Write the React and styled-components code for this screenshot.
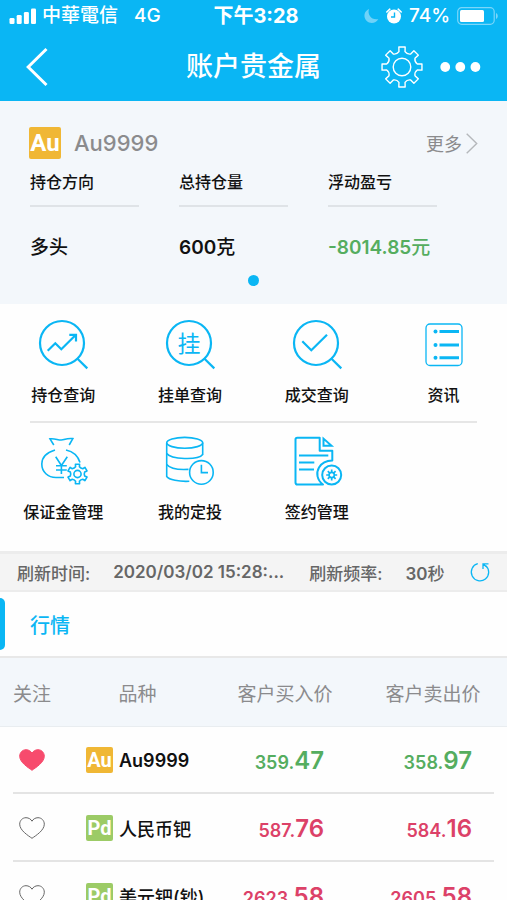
import React, { useState } from 'react';
import styled, { createGlobalStyle } from 'styled-components';

const BLUE = '#0ab6f4';

const GlobalStyle = createGlobalStyle`
  * {
    box-sizing: border-box;
  }

  body {
    margin: 0;
    background: #fefefe;
    color: #111;
    font-family: Inter, "Noto Sans CJK SC", sans-serif;
    font-weight: 500;
  }

  button {
    padding: 0;
    border: none;
    background: none;
    color: inherit;
    font: inherit;
    cursor: pointer;
  }

  svg {
    display: block;
    overflow: visible;
  }
`;

const Screen = styled.div`
  display: flex;
  flex-direction: column;
  height: 100vh;
  overflow: hidden;
`;

const Header = styled.header`
  flex: none;
  background: ${BLUE};
  color: white;
`;

const StatusBar = styled.div`
  display: grid;
  grid-template-columns: 1fr auto 1fr;
  align-items: center;
  height: 32px;
  padding: 0 9px;
  font-family: Inter, "Noto Sans CJK TC", sans-serif;
  font-size: 19px;
  line-height: 24px;
`;

const StatusGroup = styled.div`
  display: flex;
  align-items: center;
  justify-content: ${({ $end }) => ($end ? 'flex-end' : 'flex-start')};
  gap: ${({ $end }) => ($end ? '7px' : '6px')};
`;

const Carrier = styled.span`
  margin-right: 10px;
`;

const Clock = styled.span`
  padding-left: 5px;
  font-size: 20px;
  font-weight: 700;
`;

const NavBar = styled.div`
  display: grid;
  grid-template-columns: 1fr auto 1fr;
  align-items: center;
  height: 69px;
  padding: 0 26px;
`;

const NavTitle = styled.h1`
  margin: 0;
  font-size: 27px;
  font-weight: 500;
  line-height: 36px;
`;

const NavActions = styled.div`
  display: flex;
  align-items: center;
  justify-content: flex-end;
  gap: 17px;
`;

const NavButton = styled.button`
  justify-self: start;
`;

const Summary = styled.section`
  flex: none;
  padding: 26px 29px 18px;
  background: #f3f7fb;
`;

const SummaryTop = styled.div`
  display: flex;
  align-items: center;
  height: 32px;
`;

const Badge = styled.span`
  display: flex;
  flex: none;
  align-items: center;
  justify-content: center;
  width: ${({ $large }) => ($large ? '32px' : '27px')};
  height: ${({ $large }) => ($large ? '32px' : '26px')};
  border-radius: 2px;
  background: ${({ $color }) => $color};
  color: white;
  font-family: Roboto, sans-serif;
  font-size: ${({ $large }) => ($large ? '24px' : '20px')};
  font-weight: 700;
  line-height: 1;
`;

const SummaryName = styled.h2`
  flex: 1;
  margin: 0 0 0 13px;
  color: #8b8b8d;
  font-size: 22px;
  font-weight: 500;
  line-height: 32px;
`;

const MoreLink = styled.a`
  display: flex;
  align-items: center;
  gap: 4px;
  color: #8b8b8d;
  font-size: 18px;
  font-weight: 400;
  text-decoration: none;
`;

const Figures = styled.dl`
  display: grid;
  grid-template-columns: repeat(3, 1fr);
  gap: 40px;
  margin: 11px 41px 15px 1px;
`;

const FigureLabel = styled.dt`
  padding-bottom: 11px;
  border-bottom: 2px solid #dfe3e7;
  font-size: 16px;
  line-height: 24px;
`;

const FigureValue = styled.dd`
  margin: 29px 0 0;
  color: ${({ $down }) => ($down ? '#55ad5f' : '#111')};
  font-size: 19px;
  font-weight: 600;
  line-height: 24px;
  white-space: nowrap;
`;

const CjkUnit = styled.span`
  font-weight: 500;
`;

const PageDot = styled.div`
  width: 11px;
  height: 11px;
  margin: 0 auto;
  border-radius: 50%;
  background: ${BLUE};
`;

const Menu = styled.nav`
  flex: none;
  padding: 15px 0 27px;
`;

const MenuRow = styled.div`
  display: grid;
  grid-template-columns: repeat(4, 1fr);
`;

const MenuDivider = styled.hr`
  height: 2px;
  margin: 14px 30px 13px;
  border: none;
  background: #e6e6e6;
`;

const MenuItem = styled.a`
  display: flex;
  flex-direction: column;
  align-items: center;
  gap: 14px;
  color: #111;
  font-size: 16px;
  line-height: 24px;
  text-decoration: none;
`;

const RefreshBar = styled.div`
  display: flex;
  flex: none;
  align-items: center;
  height: 41px;
  padding: 0 17px;
  border-top: 3px solid #ececec;
  border-bottom: 2px solid #ececec;
  background: #f4f4f4;
  color: #666;
  font-size: 17px;
  white-space: nowrap;
`;

const RefreshValue = styled.span`
  margin-right: ${({ $last }) => ($last ? 'auto' : '25px')};
  margin-left: 23px;
  font-weight: 600;
`;

const Tabs = styled.div`
  display: flex;
  flex: none;
  align-items: center;
  height: 66px;
  border-bottom: 2px solid #e8e8e8;
`;

const Tab = styled.button`
  display: flex;
  align-items: center;
  gap: 25px;
  color: ${BLUE};
  font-size: 20px;

  &::before {
    content: '';
    width: 5px;
    height: 52px;
    border-radius: 0 6px 6px 0;
    background: ${BLUE};
  }
`;

const Quotes = styled.div`
  flex: 1;
  min-height: 0;
  overflow-y: auto;
  scrollbar-width: none;
`;

const QuoteTable = styled.table`
  width: 100%;
  border-collapse: collapse;
  table-layout: fixed;
`;

const HeadCell = styled.th`
  width: ${({ $width }) => $width || 'auto'};
  height: 68px;
  padding: 2px 0 0;
  border-bottom: 1px solid #e9edf0;
  background: #f3f7fb;
  color: #8b8b8d;
  font-size: 19px;
  font-weight: 400;
  white-space: nowrap;
`;

const QuoteRow = styled.tr`
  height: 68px;
  background: linear-gradient(#e4e4e4, #e4e4e4) center bottom / calc(100% - 26px) 2px no-repeat;
`;

const HeartCell = styled.td`
  padding: 0;
  text-align: center;
`;

const HeartButton = styled.button`
  display: block;
  margin: 0 auto;
`;

const NameCell = styled.td`
  padding: 0 0 0 22px;
`;

const Product = styled.div`
  display: flex;
  align-items: center;
  gap: 6px;
  font-size: 18px;
  font-weight: 600;
  white-space: nowrap;
`;

const ProductName = styled.span`
  font-weight: ${({ $latin }) => ($latin ? 600 : 500)};
`;

const PriceCell = styled.td`
  padding: 0 35px 0 0;
  color: ${({ $up }) => ($up ? '#dc4168' : '#55ad5f')};
  font-size: 18px;
  font-weight: 600;
  text-align: right;
  white-space: nowrap;
`;

const Cents = styled.span`
  font-size: 24px;
`;

function gearPath(cx, cy, outer, inner, teeth) {
  const step = (Math.PI * 2) / teeth;
  const pt = (r, a) => `${(cx + r * Math.sin(a)).toFixed(2)} ${(cy - r * Math.cos(a)).toFixed(2)}`;
  let d = '';
  for (let i = 0; i < teeth; i++) {
    const a = i * step;
    d += `${i ? 'L' : 'M'}${pt(inner, a - step * 0.25)} L${pt(outer, a - step * 0.2)} `;
    d += `L${pt(outer, a + step * 0.2)} L${pt(inner, a + step * 0.25)} `;
    d += `Q${pt(inner * 0.86, a + step * 0.5)} ${pt(inner, a + step * 0.75)} `;
  }
  return d + 'Z';
}

function Icon({ children, stroke = 2 }) {
  return (
    <svg width="50" height="50" viewBox="0 0 50 50" fill="none" stroke={BLUE} strokeWidth={stroke} aria-hidden="true">
      {children}
    </svg>
  );
}

function SearchIcon({ children }) {
  return (
    <Icon stroke={2.2}>
      <circle cx="24" cy="24" r="22" />
      <path d="M39 39.3L49.3 49.4" />
      {children}
    </Icon>
  );
}

const icons = {
  position: (
    <SearchIcon>
      <path d="M9.7 31.7L17.3 24.2L23.3 30.3L37.4 16.2M31.3 15.8H38V22.4" />
    </SearchIcon>
  ),
  pending: (
    <SearchIcon>
      <text x="24" y="33" textAnchor="middle" fontSize="23" fontWeight="400" fill={BLUE} stroke="none">挂</text>
    </SearchIcon>
  ),
  deal: (
    <SearchIcon>
      <path d="M10.3 22.3L19.3 31.3L35 15.7" />
    </SearchIcon>
  ),
  news: (
    <Icon stroke={1.3}>
      <rect x="7" y="5" width="36" height="41.5" rx="4" />
      <path d="M20.5 12.5H40M20.5 26H40M20.5 38.7H40" strokeWidth="3" />
      <g fill={BLUE} stroke="none">
        <circle cx="16.5" cy="12.5" r="2" />
        <circle cx="16.5" cy="26" r="2" />
        <circle cx="16.5" cy="38.7" r="2" />
      </g>
    </Icon>
  ),
  margin: (
    <Icon stroke={1.6}>
      <path d="M15.8 9L12 2.8C18 2 21 5.2 26 3.6C29.5 2.5 32 2.2 34.8 2.6L31.2 9" />
      <path d="M17 14C9 16.5 3.8 21.5 3.8 28C3.8 36 10 41.5 18 41.5H26M28 14C35 15.5 40 20 42 26.5" />
      <path d="M17.7 20.7L23.4 29.5L29.3 20.7M23.4 29.5V38M18 29.8H28.8M18 34H28.8" />
      <path d={gearPath(39.5, 38, 10, 7.4, 6)} strokeLinejoin="round" />
      <circle cx="39.5" cy="38" r="3.6" />
    </Icon>
  ),
  invest: (
    <Icon stroke={1.6}>
      <ellipse cx="19.7" cy="6.8" rx="18" ry="5.4" />
      <path d="M1.7 6.8V40.5C4 43.8 14 45.8 24.3 45.3M37.7 6.8V19" />
      <path d="M1.7 17.5C6 23.5 33 24.5 37.7 18.5M1.7 28.5C5 32.5 14 34 23.5 33.4" />
      <circle cx="36.4" cy="36.4" r="11.8" />
      <path d="M36.4 28.7V36.6H43" />
    </Icon>
  ),
  contract: (
    <Icon>
      <path d="M27.7 1.8H5.3Q3.5 1.8 3.5 3.6V46.5Q3.5 48.6 5.5 48.6H31C25 44 23.8 37 27 31.5C30 26.5 35 24.8 40.3 24.6V14.7H27.7Z" strokeLinejoin="round" />
      <path d="M31.5 2.6V9.7H39.5Z" />
      <path d="M7 19.4H36.3M7 26.4H22.3M7 33.4H22" />
      <circle cx="39.7" cy="39" r="9.5" />
      <circle cx="39.7" cy="39" r="2.6" strokeWidth="1.6" />
      <path d="M39.7 33.5V36.5M39.7 41.5V44.5M34.2 39H37.2M42.2 39H45.2M35.8 35.1L38 37.3M41.4 40.7L43.6 42.9M43.6 35.1L41.4 37.3M38 40.7L35.8 42.9" strokeWidth="1.7" />
    </Icon>
  ),
};

const menuRows = [
  [
    { icon: 'position', label: '持仓查询' },
    { icon: 'pending', label: '挂单查询' },
    { icon: 'deal', label: '成交查询' },
    { icon: 'news', label: '资讯' },
  ],
  [
    { icon: 'margin', label: '保证金管理' },
    { icon: 'invest', label: '我的定投' },
    { icon: 'contract', label: '签约管理' },
  ],
];

const metals = { Au: '#f0b735', Pd: '#9ccb66' };

const quotes = [
  { metal: 'Au', name: 'Au9999', buy: '359.47', sell: '358.97', up: false },
  { metal: 'Pd', name: '人民币钯', buy: '587.76', sell: '584.16', up: true },
  { metal: 'Pd', name: '美元钯(钞)', buy: '2623.58', sell: '2605.58', up: true },
];

function Price({ value, up }) {
  const [whole, cents] = value.split('.');
  return (
    <PriceCell $up={up}>
      {whole}.<Cents>{cents}</Cents>
    </PriceCell>
  );
}

function Heart({ filled }) {
  return (
    <svg width="26" height="22" viewBox="0 0 26 22" fill={filled ? '#f74b6d' : 'none'} stroke={filled ? '#f74b6d' : '#666'} strokeWidth="1">
      <path d="M13 21.3C9.5 18.8 0.7 13.5 0.7 7.2C0.7 3.5 3.5 0.7 7 0.7C9.8 0.7 12 2.3 13 4.2C14 2.3 16.2 0.7 19 0.7C22.5 0.7 25.3 3.5 25.3 7.2C25.3 13.5 16.5 18.8 13 21.3Z" />
    </svg>
  );
}

function PhoneStatus() {
  return (
    <StatusBar>
      <StatusGroup>
        <svg width="27" height="17" viewBox="0 0 27 17" fill="white">
          <rect x="0.5" y="10" width="5" height="6" rx="1.3" />
          <rect x="7.7" y="7" width="5" height="9" rx="1.3" />
          <rect x="14.9" y="4" width="5" height="12" rx="1.3" />
          <rect x="22" y="0.5" width="5" height="15.5" rx="1.3" />
        </svg>
        <Carrier>中華電信</Carrier>
        <span>4G</span>
      </StatusGroup>
      <Clock>下午3:28</Clock>
      <StatusGroup $end>
        <svg width="15" height="16" viewBox="0 0 15 16" fill="#6fd2f8">
          <path d="M5 1C0 3 -1 9 2.5 12.7C6 16.2 12 15.5 14.3 11C8 12.5 3 7 5 1Z" />
        </svg>
        <svg width="16" height="16" viewBox="0 0 16 16" fill="white">
          <circle cx="8" cy="8.5" r="7" />
          <path d="M0.8 4L3.8 1.2M15.2 4L12.2 1.2" stroke="white" strokeWidth="1.6" strokeLinecap="round" />
          <path d="M8.5 4.5V9H5" fill="none" stroke={BLUE} strokeWidth="1.4" />
        </svg>
        <span>74%</span>
        <svg width="41" height="18" viewBox="0 0 41 18" fill="none">
          <rect x="0.7" y="0.7" width="36.5" height="16.6" rx="4" stroke="#7bd6f9" strokeWidth="1.2" />
          <rect x="3" y="3" width="24" height="12" rx="1.5" fill="white" />
          <path d="M39 6C41.3 7.2 41.3 10.8 39 12Z" fill="#7bd6f9" />
        </svg>
      </StatusGroup>
    </StatusBar>
  );
}

export default function App() {
  const [favorites, setFavorites] = useState(['Au9999']);

  function toggleFavorite(name) {
    setFavorites(favorites.includes(name) ? favorites.filter((f) => f !== name) : [...favorites, name]);
  }

  return (
    <Screen>
      <GlobalStyle />
      <Header>
        <PhoneStatus />
        <NavBar>
          <NavButton aria-label="返回">
            <svg width="22" height="38" viewBox="0 0 22 38" fill="none" stroke="white" strokeWidth="3">
              <path d="M20.5 1L2.2 19L20.5 37" />
            </svg>
          </NavButton>
          <NavTitle>账户贵金属</NavTitle>
          <NavActions>
            <NavButton aria-label="设置">
              <svg width="42" height="42" viewBox="0 0 42 42" fill="none" stroke="white" strokeWidth="1.4" strokeLinejoin="round">
                <path d={gearPath(21, 21, 20.2, 15.6, 8)} />
                <circle cx="21" cy="21" r="8.8" />
              </svg>
            </NavButton>
            <NavButton aria-label="菜单">
              <svg width="41" height="10" viewBox="0 0 41 10" fill="white">
                <circle cx="5.2" cy="5" r="4.9" />
                <circle cx="20.3" cy="5" r="4.9" />
                <circle cx="35.4" cy="5" r="4.9" />
              </svg>
            </NavButton>
          </NavActions>
        </NavBar>
      </Header>

      <Summary>
        <SummaryTop>
          <Badge $large $color={metals.Au}>Au</Badge>
          <SummaryName>Au9999</SummaryName>
          <MoreLink href="#more">
            更多
            <svg width="12" height="21" viewBox="0 0 12 21" fill="none" stroke="#b5b8bb" strokeWidth="1.4">
              <path d="M0.7 0.7L10.7 10.5L0.7 20.3" />
            </svg>
          </MoreLink>
        </SummaryTop>
        <Figures>
          <div>
            <FigureLabel>持仓方向</FigureLabel>
            <FigureValue><CjkUnit>多头</CjkUnit></FigureValue>
          </div>
          <div>
            <FigureLabel>总持仓量</FigureLabel>
            <FigureValue>600<CjkUnit>克</CjkUnit></FigureValue>
          </div>
          <div>
            <FigureLabel>浮动盈亏</FigureLabel>
            <FigureValue $down>-8014.85<CjkUnit>元</CjkUnit></FigureValue>
          </div>
        </Figures>
        <PageDot />
      </Summary>

      <Menu>
        {menuRows.map((row, i) => (
          <React.Fragment key={i}>
            {i > 0 && <MenuDivider />}
            <MenuRow>
              {row.map((item) => (
                <MenuItem key={item.icon} href={`#${item.icon}`}>
                  {icons[item.icon]}
                  {item.label}
                </MenuItem>
              ))}
            </MenuRow>
          </React.Fragment>
        ))}
      </Menu>

      <RefreshBar>
        <span>刷新时间:</span>
        <RefreshValue>2020/03/02 15:28:...</RefreshValue>
        <span>刷新频率:</span>
        <RefreshValue $last>30<CjkUnit>秒</CjkUnit></RefreshValue>
        <NavButton aria-label="刷新">
          <svg width="20" height="20" viewBox="0 0 20 20" fill="none" stroke={BLUE} strokeWidth="1.3">
            <path d="M7.8 1.7A8.7 8.7 0 1 0 15.5 3.4" />
            <path d="M13 7V1.8H18.5M13 1.8L16 4.5" />
          </svg>
        </NavButton>
      </RefreshBar>

      <Tabs>
        <Tab>行情</Tab>
      </Tabs>

      <Quotes>
        <QuoteTable>
          <thead>
            <tr>
              <HeadCell $width="64px">关注</HeadCell>
              <HeadCell $width="29%">品种</HeadCell>
              <HeadCell>客户买入价</HeadCell>
              <HeadCell>客户卖出价</HeadCell>
            </tr>
          </thead>
          <tbody>
            {quotes.map((q) => (
              <QuoteRow key={q.name}>
                <HeartCell>
                  <HeartButton aria-label="关注" onClick={() => toggleFavorite(q.name)}>
                    <Heart filled={favorites.includes(q.name)} />
                  </HeartButton>
                </HeartCell>
                <NameCell>
                  <Product>
                    <Badge $color={metals[q.metal]}>{q.metal}</Badge>
                    <ProductName $latin={q.name.startsWith('Au')}>{q.name}</ProductName>
                  </Product>
                </NameCell>
                <Price value={q.buy} up={q.up} />
                <Price value={q.sell} up={q.up} />
              </QuoteRow>
            ))}
          </tbody>
        </QuoteTable>
      </Quotes>
    </Screen>
  );
}
